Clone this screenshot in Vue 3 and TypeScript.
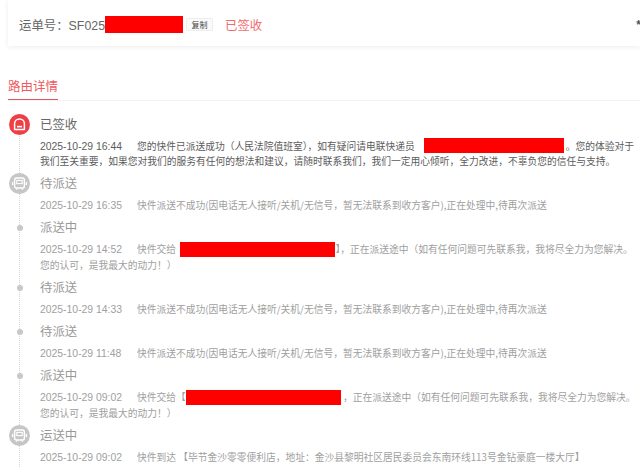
<script setup lang="ts">
interface Seg { t?: string; w?: number }
interface Item { title: string; date: string; kind: 'sign' | 'bus' | 'dot'; segs: Seg[]; line2?: string; active?: boolean }

const nd = '快件派送不成功(因电话无人接听/关机/无信号，暂无法联系到收方客户),正在处理中,待再次派送'
const items: Item[] = [
  { title: '已签收', date: '2025-10-29 16:44', kind: 'sign', active: true,
    segs: [{ t: '您的快件已派送成功（人民法院值班室），如有疑问请电联快递员\u00a0\u00a0\u00a0\u00a0' }, { w: 140 }, { t: ' 。您的体验对于' }],
    line2: '我们至关重要，如果您对我们的服务有任何的想法和建议，请随时联系我们，我们一定用心倾听，全力改进，不辜负您的信任与支持。' },
  { title: '待派送', date: '2025-10-29 16:35', kind: 'bus', segs: [{ t: nd }] },
  { title: '派送中', date: '2025-10-29 14:52', kind: 'dot',
    segs: [{ t: '快件交给\u00a0\u00a0' }, { w: 155 }, { t: '】，正在派送途中（如有任何问题可先联系我，我将尽全力为您解决。' }],
    line2: '您的认可，是我最大的动力！）' },
  { title: '待派送', date: '2025-10-29 14:33', kind: 'dot', segs: [{ t: nd }] },
  { title: '待派送', date: '2025-10-29 11:48', kind: 'dot', segs: [{ t: nd }] },
  { title: '派送中', date: '2025-10-29 09:02', kind: 'dot',
    segs: [{ t: '快件交给【' }, { w: 155 }, { t: '\u00a0，正在派送途中（如有任何问题可先联系我，我将尽全力为您解决。' }],
    line2: '您的认可，是我最大的动力！）' },
  { title: '运送中', date: '2025-10-29 09:02', kind: 'bus', segs: [{ t: '快件到达 【毕节金沙零零便利店，地址：金沙县黎明社区居民委员会东南环线113号金钻豪庭一楼大厅】' }] },
]
</script>

<template>
  <div class="page">
    <header class="card">
      <span class="label">运单号：SF025</span>
      <span class="mask mask-top"></span>
      <button class="copy" type="button">复制</button>
      <span class="status">已签收</span>
      <span class="star">*</span>
    </header>

    <nav class="tabs"><span class="tab">路由详情</span></nav>

    <ul class="timeline">
      <li v-for="(it, i) in items" :key="i" class="row" :class="{ active: it.active }">
        <div class="rail">
          <svg v-if="it.kind === 'sign'" class="icon" viewBox="0 0 21 21">
            <circle cx="10.5" cy="10.5" r="10.5" fill="#ef3f45" />
            <path d="M5.6 15.5V9.6c0-2.7 2.2-4.7 4.9-4.7s4.9 2 4.9 4.7v5.9z" fill="none" stroke="#fff" stroke-width="1.5" stroke-linejoin="round" />
            <path d="M8 12.6h5" stroke="#fff" stroke-width="1.6" />
          </svg>
          <svg v-else-if="it.kind === 'bus'" class="icon" viewBox="0 0 21 21">
            <circle cx="10.5" cy="10.5" r="10.5" fill="#c6c6c6" />
            <rect x="5.6" y="5" width="9.8" height="10" rx="2" fill="none" stroke="#fff" stroke-width="1.4" />
            <rect x="7.8" y="7.4" width="5.4" height="3.2" fill="none" stroke="#fff" stroke-width="1.1" />
            <path d="M3.6 9v3M17.4 9v3M7.6 15.4v1.4M13.4 15.4v1.4" stroke="#fff" stroke-width="1.4" />
          </svg>
          <span v-else class="dot"></span>
        </div>
        <div class="body">
          <div class="title">{{ it.title }}</div>
          <div class="detail">
            <span class="date">{{ it.date }}</span>
            <template v-for="(s, j) in it.segs" :key="j">
              <span v-if="s.w" class="mask mask-line" :style="{ width: s.w + 'px' }"></span>
              <template v-else>{{ s.t }}</template>
            </template>
            <template v-if="it.line2"><br />{{ it.line2 }}</template>
          </div>
        </div>
      </li>
    </ul>
  </div>
</template>

<style>
html, body { background: #fff; overflow: hidden; }
</style>

<style scoped>
.page {
  width: 640px;
  height: 467px;
  overflow: hidden;
  font-family: "Noto Sans CJK SC", "Liberation Sans", sans-serif;
  background: #fff;
  color: #999;
}
.card {
  display: flex;
  align-items: center;
  box-sizing: border-box;
  height: 46px;
  margin-left: 8px;
  padding: 3px 0 0 11px;
  background: #fff;
  box-shadow: 0 1px 5px rgba(0, 0, 0, 0.08);
  white-space: nowrap;
}
.label { font-family: "Liberation Sans", "Noto Sans CJK SC", sans-serif; font-size: 12.4px; color: #666; width: 86px; }
.mask { display: inline-block; height: 15px; background: #f00; vertical-align: middle; }
.mask-top { width: 78px; height: 17px; }
.mask-line { position: relative; top: -1.5px; }
.copy {
  width: 27px;
  height: 13px;
  margin-left: 3px;
  padding: 0;
  border: 1px solid #eee;
  border-radius: 1px;
  background: #fafafa;
  font: 8px "Noto Sans CJK SC", sans-serif;
  line-height: 11px;
  color: #444;
}
.status { margin-left: 12px; font-size: 12.4px; color: #f16a6e; }
.star { margin-left: auto; margin-right: -1px; font: bold 12px "Liberation Sans", sans-serif; color: #555; }
.tabs {
  display: flex;
  margin: 30px 0 0 8px;
  height: 24px;
  border-bottom: 1px solid #f3f3f3;
}
.tab {
  width: 50px;
  height: 23px;
  font-size: 12.5px;
  line-height: 20px;
  color: #ef5a60;
  border-bottom: 1.5px solid #e0565c;
  white-space: nowrap;
}
.timeline { list-style: none; margin: 12.5px 0 0; padding: 0; }
.row { display: flex; position: relative; margin-bottom: 4px; }
.row::before {
  content: "";
  position: absolute;
  left: 19px;
  top: 10px;
  bottom: -40px;
  border-left: 1px dotted #d4d4d4;
}
.rail {
  position: relative;
  flex: none;
  width: 40px;
  height: 21px;
  padding-left: 8.5px;
  box-sizing: border-box;
  display: flex;
  align-items: center;
}
.icon { display: block; width: 21px; height: 21px; }
.dot { width: 6px; height: 6px; margin-left: 8px; border-radius: 50%; background: #c8c8c8; }
.body { min-width: 0; }
.title { font-size: 12.4px; line-height: 21px; color: #999; }
.detail { margin-top: 4px; font-size: 9.75px; line-height: 15px; color: #a0a0a0; white-space: nowrap; }
.date { display: inline-block; width: 97px; font-family: "Liberation Sans", sans-serif; font-size: 10.4px; }
.active .title { color: #666; }
.active .detail { color: #5c5c5c; }
</style>
